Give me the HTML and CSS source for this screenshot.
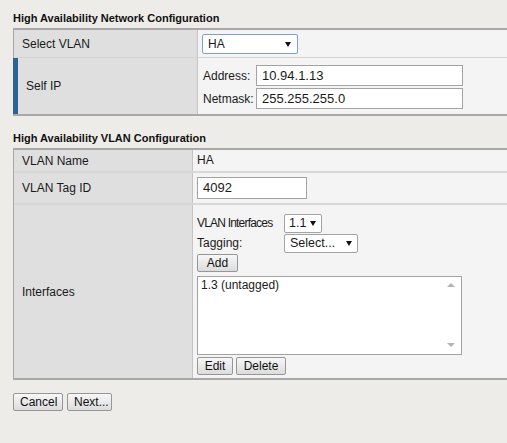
FILE: index.html
```html
<!DOCTYPE html>
<html lang="en">
<head>
  <meta charset="UTF-8">
  <title>High Availability</title>
  <link rel="stylesheet" href="styles.css">
</head>
<body>
  <div class="page">
    <h2 class="section-title">High Availability Network Configuration</h2>
    <div class="form-table net-table">
      <div class="form-row">
        <div class="form-label">Select VLAN</div>
        <div class="form-value row-select">
          <span class="select select-focus select-ha">HA</span>
        </div>
      </div>
      <div class="form-row">
        <div class="form-label label-flag">Self IP</div>
        <div class="form-value row-ip">
          <div class="field">
            <span class="field-name">Address:</span>
            <span class="text-input input-ip">10.94.1.13</span>
          </div>
          <div class="field">
            <span class="field-name">Netmask:</span>
            <span class="text-input input-ip">255.255.255.0</span>
          </div>
        </div>
      </div>
    </div>

    <h2 class="section-title title-vlan">High Availability VLAN Configuration</h2>
    <div class="form-table vlan-table">
      <div class="form-row">
        <div class="form-label">VLAN Name</div>
        <div class="form-value row-name">HA</div>
      </div>
      <div class="form-row">
        <div class="form-label">VLAN Tag ID</div>
        <div class="form-value row-tag">
          <span class="text-input input-tag">4092</span>
        </div>
      </div>
      <div class="form-row">
        <div class="form-label">Interfaces</div>
        <div class="form-value row-ifaces">
          <div class="field">
            <span class="field-name name-iface name-narrow">VLAN Interfaces</span>
            <span class="select select-iface">1.1</span>
          </div>
          <div class="field">
            <span class="field-name name-iface">Tagging:</span>
            <span class="select select-tag">Select...</span>
          </div>
          <div class="btn-line line-add">
            <span class="btn btn-add">Add</span>
          </div>
          <div class="listbox">
            <div class="list-item">1.3 (untagged)</div>
            <span class="scroll-arrow arrow-up"></span>
            <span class="scroll-arrow arrow-down"></span>
          </div>
          <div class="btn-line">
            <span class="btn btn-edit">Edit</span>
            <span class="btn btn-delete">Delete</span>
          </div>
        </div>
      </div>
    </div>

    <div class="actions">
      <span class="btn btn-cancel">Cancel</span>
      <span class="btn btn-next">Next...</span>
    </div>
  </div>
</body>
</html>
```

FILE: styles.css
```css
html, body{
  margin: 0;
  padding: 0;
  overflow: hidden;
  background: #eeece8;
}
body{
  font: 12px "Liberation Sans", Arial, sans-serif;
  color: #1a1a1a;
}
.page{
  padding: 11px 0 0 13px;
}
.section-title{
  margin: 0 0 3px;
  font-size: 11px;
  line-height: 14px;
  font-weight: bold;
  color: #111;
}
.title-vlan{
  margin-top: 15px;
}
.form-table{
  width: 510px;
  border-top: 2px solid #a8a8a8;
  border-bottom: 2px solid #a8a8a8;
  border-left: 1px solid #a8a8a8;
}
.form-row{
  display: flex;
  border-top: 1px solid #d3d3d3;
}
.form-row:first-child{
  border-top: none;
}
.form-label{
  display: flex;
  align-items: center;
  padding-left: 8px;
  background: #dfdfdf;
  border-right: 1px solid #c4c4c4;
}
.net-table .form-label{
  width: 175px;
}
.vlan-table .form-label{
  width: 170px;
}
.vlan-table .form-row + .form-row{
  border-top: 2px solid #d8d8d8;
}
.form-label.label-flag{
  border-left: 5px solid #2c6396;
  margin-left: -1px;
  padding-left: 8px;
  width: 171px;
}
.form-value{
  flex: 1;
  background: #f4f4f4;
  padding-left: 4px;
}
.row-select{
  padding-top: 4px;
  padding-bottom: 3px;
  height: 20px;
}
.row-ip{
  padding-top: 7px;
  padding-bottom: 5px;
  padding-left: 5px;
}
.row-name{
  height: 21px;
  line-height: 21px;
}
.row-tag{
  padding-top: 4px;
  padding-bottom: 4px;
}
.row-ifaces{
  padding-top: 8px;
  padding-bottom: 3px;
}
.field{
  display: flex;
  align-items: center;
  height: 20px;
}
.row-ip .field{
  height: 21px;
}
.row-ip .field + .field{
  margin-top: 2px;
}
.field-name{
  width: 53px;
  white-space: nowrap;
}
.field-name.name-iface{
  width: 87px;
}
.name-narrow{
  letter-spacing: -0.8px;
}
.text-input{
  display: inline-block;
  box-sizing: border-box;
  height: 21px;
  line-height: 19px;
  padding-left: 5px;
  background: #fff;
  border: 1px solid #a3a3a3;
  font-size: 13px;
}
.input-ip{
  width: 207px;
}
.input-tag{
  width: 110px;
  height: 22px;
  line-height: 20px;
}
.select{
  position: relative;
  display: inline-block;
  box-sizing: border-box;
  height: 19px;
  line-height: 17px;
  padding-left: 4px;
  background: #fff;
  border: 1px solid #a3a3a3;
  border-radius: 2px;
  font-size: 12.5px;
}
.select:after{
  content: '';
  position: absolute;
  right: 5px;
  top: 6px;
  border-left: 3px solid transparent;
  border-right: 3px solid transparent;
  border-top: 5px solid #111;
}
.select-focus{
  border-color: #7b9ed6;
}
.select-ha{
  width: 96px;
  height: 20px;
  line-height: 18px;
  padding-left: 5px;
  font-size: 12px;
}
.select-ha:after{
  right: 6px;
  top: 7px;
}
.select-iface{
  width: 38px;
}
.select-tag{
  width: 74px;
  padding-left: 5px;
}
.btn-line{
  display: flex;
  gap: 3px;
}
.line-add{
  margin-top: 1px;
}
.btn{
  display: inline-block;
  box-sizing: border-box;
  height: 18px;
  line-height: 16px;
  padding: 0 6px;
  text-align: center;
  background: linear-gradient(#f7f7f7, #dcdcdc);
  border: 1px solid #969696;
  border-radius: 2px;
  color: #111;
}
.btn-add{
  width: 41px;
}
.btn-edit{
  width: 36px;
}
.btn-delete{
  width: 50px;
}
.listbox{
  position: relative;
  box-sizing: border-box;
  width: 265px;
  height: 79px;
  margin-top: 4px;
  margin-bottom: 2px;
  background: #fff;
  border: 1px solid #a3a3a3;
}
.list-item{
  padding: 2px 0 0 3px;
  line-height: 13px;
}
.scroll-arrow{
  position: absolute;
  right: 6px;
  border-left: 4px solid transparent;
  border-right: 4px solid transparent;
}
.arrow-up{
  top: 6px;
  border-bottom: 4px solid #b4b4b4;
}
.arrow-down{
  bottom: 7px;
  border-top: 4px solid #b4b4b4;
}
.actions{
  display: flex;
  gap: 4px;
  margin-top: 13px;
}
.btn-cancel{
  width: 50px;
}
.btn-next{
  width: 45px;
}
```
